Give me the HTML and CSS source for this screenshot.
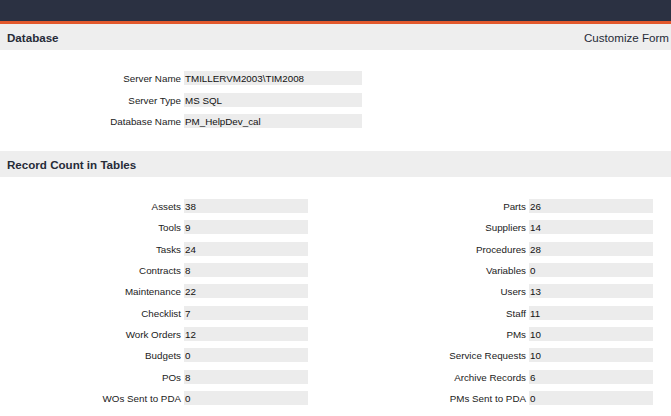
FILE: index.html
```html
<!DOCTYPE html>
<html>
<head>
    <link rel="stylesheet" href="styles.css">
</head>
<body>
    <div class="topbar"></div>
    <div class="section-head">
        <span class="section-title">Database</span>
        <a class="customize">Customize Form</a>
    </div>
    <div class="server-info">
        <label>Server Name</label><div class="field">TMILLERVM2003\TIM2008</div>
        <label>Server Type</label><div class="field">MS SQL</div>
        <label>Database Name</label><div class="field">PM_HelpDev_cal</div>
    </div>
    <div class="section-head">
        <span class="section-title">Record Count in Tables</span>
    </div>
    <div class="counts">
        <label>Assets</label><div class="field">38</div>
        <label>Parts</label><div class="field">26</div>
        <label>Tools</label><div class="field">9</div>
        <label>Suppliers</label><div class="field">14</div>
        <label>Tasks</label><div class="field">24</div>
        <label>Procedures</label><div class="field">28</div>
        <label>Contracts</label><div class="field">8</div>
        <label>Variables</label><div class="field">0</div>
        <label>Maintenance</label><div class="field">22</div>
        <label>Users</label><div class="field">13</div>
        <label>Checklist</label><div class="field">7</div>
        <label>Staff</label><div class="field">11</div>
        <label>Work Orders</label><div class="field">12</div>
        <label>PMs</label><div class="field">10</div>
        <label>Budgets</label><div class="field">0</div>
        <label>Service Requests</label><div class="field">10</div>
        <label>POs</label><div class="field">8</div>
        <label>Archive Records</label><div class="field">6</div>
        <label>WOs Sent to PDA</label><div class="field">0</div>
        <label>PMs Sent to PDA</label><div class="field">0</div>
    </div>
</body>
</html>
```

FILE: styles.css
```css
body {
    margin: 0;
    font-family: "Liberation Sans", Arial, sans-serif;
    font-size: 9.8px;
    color: #222;
    background: #fff;
    overflow: hidden;
}
.topbar {
    height: 21px;
    background: #2b3142;
    border-bottom: 3px solid #e2582c;
}
.section-head {
    height: 26px;
    background: #eeeeee;
    display: flex;
    align-items: center;
    justify-content: space-between;
    padding: 0 2px 0 7px;
    color: #262b38;
}
.section-title {
    font-weight: bold;
    font-size: 11.6px;
}
.customize {
    font-size: 11.6px;
    cursor: pointer;
}
label,
.field {
    height: 14px;
    line-height: 14px;
    box-sizing: border-box;
    padding-top: 1px;
    white-space: nowrap;
}
label {
    text-align: right;
    padding-right: 3px;
}
.field {
    padding-left: 1px;
    background: #ececec;
    color: #111;
}
.server-info {
    display: grid;
    grid-template-columns: 184px 178px;
    row-gap: 7.5px;
    padding: 21px 0 23px;
}
.counts {
    display: grid;
    grid-template-columns: 184px 124px 221px 124px;
    row-gap: 7.33px;
    padding-top: 22px;
}
```
